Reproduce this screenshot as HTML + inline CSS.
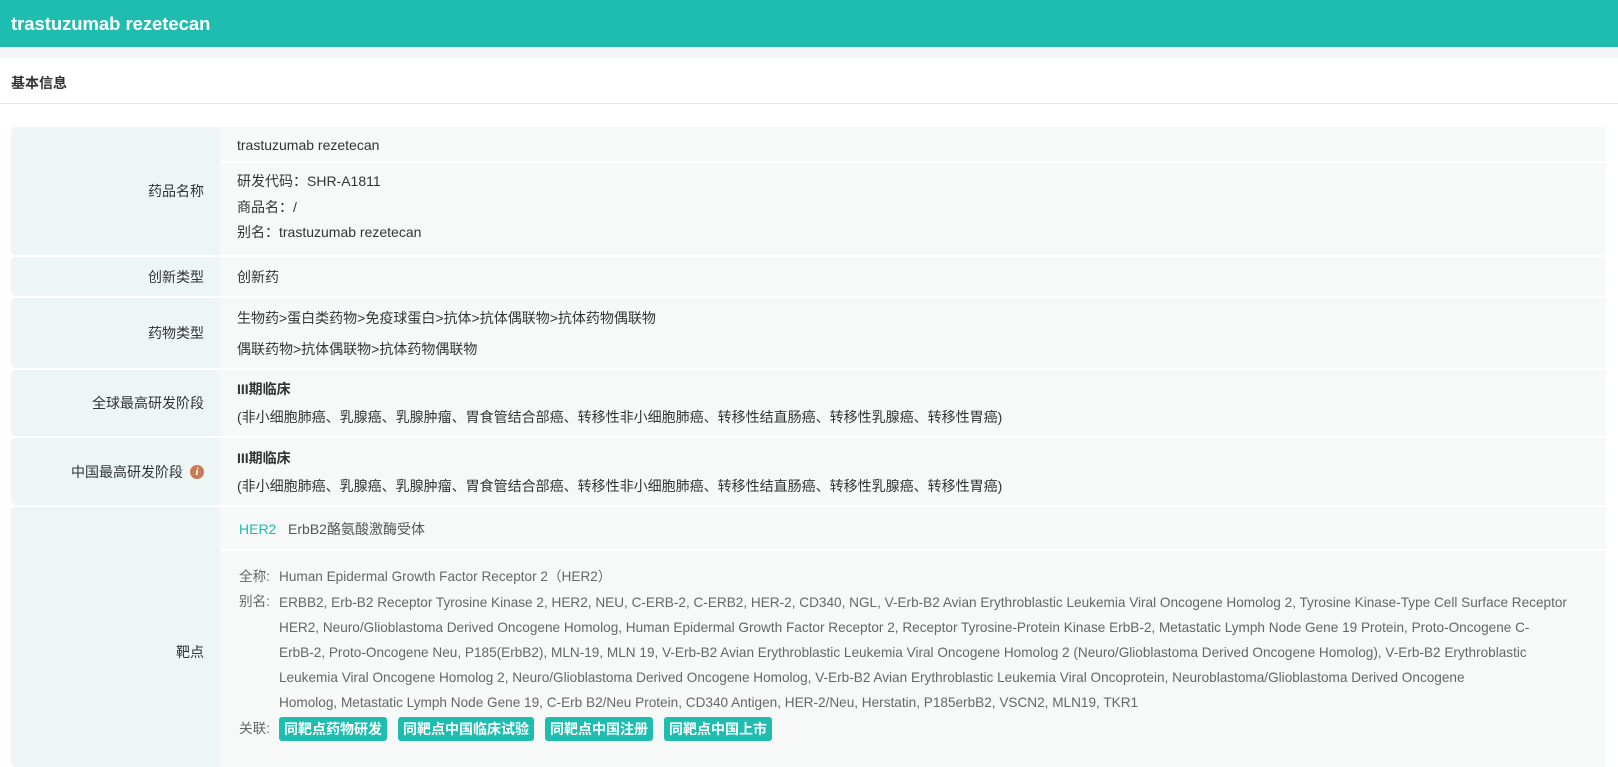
<!DOCTYPE html>
<html><head><meta charset="utf-8"><style>
*{margin:0;padding:0;box-sizing:border-box}
body{width:1618px;height:752px;overflow:hidden;background:#fff;font-family:"Liberation Sans","Noto Sans CJK SC",sans-serif;font-size:14px;color:#333;position:relative}
.hdr{position:absolute;left:0;top:0;width:1618px;height:47px;background:#1fbcb0;color:#fff;font-weight:bold;font-size:18.4px;line-height:47px;padding-left:11px}
.gray{position:absolute;left:0;top:47px;width:1618px;height:11px;background:#f5f6f8}
.sec{position:absolute;left:11px;top:72px;font-weight:bold;font-size:14px;line-height:22px}
.line{position:absolute;left:0;top:103px;width:1618px;height:1px;background:#e6e6e6}
.row{position:absolute;left:11px;width:1595px}
.lab{position:absolute;left:0;top:0;bottom:0;width:209px;background:#eef6f5;border-radius:4px 0 0 4px;text-align:right;padding-right:16px;display:flex;align-items:center;justify-content:flex-end}
.con{position:absolute;left:209px;top:0;bottom:0;right:0;background:#f7f9f9}
.t{position:absolute;left:17px;white-space:nowrap;line-height:20px}
.b{font-weight:bold}
.g{color:#666;font-size:13.6px}
.btn{display:inline-block;background:#1fbcb0;color:#fff;font-weight:bold;font-size:14px;border-radius:3px;padding:0 5px;height:24px;line-height:24px;margin-right:11px}
.info{display:inline-block;width:14px;height:14px;border-radius:7px;background:#c97b55;color:#fff;font:italic bold 11px/14px "Liberation Serif",serif;text-align:center;margin-left:7px;vertical-align:2px}
</style></head><body>
<div class="hdr">trastuzumab rezetecan</div>
<div class="gray"></div>
<div class="sec">基本信息</div>
<div class="line"></div>

<div class="row" style="top:127px;height:128px">
 <div class="lab">药品名称</div>
 <div class="con">
  <div style="position:absolute;left:0;right:0;top:34px;height:2px;background:#fff"></div>
  <div class="t" style="top:8px">trastuzumab rezetecan</div>
  <div class="t" style="top:44px">研发代码：SHR-A1811</div>
  <div class="t" style="top:70px">商品名：/</div>
  <div class="t" style="top:95px">别名：trastuzumab rezetecan</div>
 </div>
</div>

<div class="row" style="top:257px;height:39px">
 <div class="lab">创新类型</div>
 <div class="con"><div class="t" style="top:10px">创新药</div></div>
</div>

<div class="row" style="top:298px;height:70px">
 <div class="lab">药物类型</div>
 <div class="con">
  <div class="t" style="top:10px">生物药&gt;蛋白类药物&gt;免疫球蛋白&gt;抗体&gt;抗体偶联物&gt;抗体药物偶联物</div>
  <div class="t" style="top:41px">偶联药物&gt;抗体偶联物&gt;抗体药物偶联物</div>
 </div>
</div>

<div class="row" style="top:370px;height:66px">
 <div class="lab">全球最高研发阶段</div>
 <div class="con">
  <div class="t b" style="top:9px">III期临床</div>
  <div class="t" style="top:37px">(非小细胞肺癌、乳腺癌、乳腺肿瘤、胃食管结合部癌、转移性非小细胞肺癌、转移性结直肠癌、转移性乳腺癌、转移性胃癌)</div>
 </div>
</div>

<div class="row" style="top:438px;height:67px">
 <div class="lab"><span>中国最高研发阶段<span class="info">i</span></span></div>
 <div class="con">
  <div class="t b" style="top:10px">III期临床</div>
  <div class="t" style="top:38px">(非小细胞肺癌、乳腺癌、乳腺肿瘤、胃食管结合部癌、转移性非小细胞肺癌、转移性结直肠癌、转移性乳腺癌、转移性胃癌)</div>
 </div>
</div>

<div class="row" style="top:507px;height:260px">
 <div class="lab" style="height:260px;align-items:flex-start;padding-top:135px">靶点</div>
 <div class="con">
  <div style="position:absolute;left:0;right:0;top:42px;height:2px;background:#fff"></div>
  <div class="t" style="top:12px;left:19px"><span style="color:#1fbcb0">HER2</span>&nbsp;&nbsp; <span style="color:#555">ErbB2酪氨酸激酶受体</span></div>
  <div class="t g" style="top:60px;left:19px">全称:</div>
  <div class="t g" style="top:60px;left:59px">Human Epidermal Growth Factor Receptor 2（HER2）</div>
  <div class="t g" style="top:85px;left:19px">别名:</div>
  <div class="t g" style="left:59px;line-height:25px;top:83px">ERBB2, Erb-B2 Receptor Tyrosine Kinase 2, HER2, NEU, C-ERB-2, C-ERB2, HER-2, CD340, NGL, V-Erb-B2 Avian Erythroblastic Leukemia Viral Oncogene Homolog 2, Tyrosine Kinase-Type Cell Surface Receptor<br>HER2, Neuro/Glioblastoma Derived Oncogene Homolog, Human Epidermal Growth Factor Receptor 2, Receptor Tyrosine-Protein Kinase ErbB-2, Metastatic Lymph Node Gene 19 Protein, Proto-Oncogene C-<br>ErbB-2, Proto-Oncogene Neu, P185(ErbB2), MLN-19, MLN 19, V-Erb-B2 Avian Erythroblastic Leukemia Viral Oncogene Homolog 2 (Neuro/Glioblastoma Derived Oncogene Homolog), V-Erb-B2 Erythroblastic<br>Leukemia Viral Oncogene Homolog 2, Neuro/Glioblastoma Derived Oncogene Homolog, V-Erb-B2 Avian Erythroblastic Leukemia Viral Oncoprotein, Neuroblastoma/Glioblastoma Derived Oncogene<br>Homolog, Metastatic Lymph Node Gene 19, C-Erb B2/Neu Protein, CD340 Antigen, HER-2/Neu, Herstatin, P185erbB2, VSCN2, MLN19, TKR1</div>
  <div class="t g" style="top:212px;left:19px">关联:</div>
  <div class="t" style="top:210px;left:59px"><span class="btn">同靶点药物研发</span><span class="btn">同靶点中国临床试验</span><span class="btn">同靶点中国注册</span><span class="btn">同靶点中国上市</span></div>
 </div>
</div>
</body></html>
